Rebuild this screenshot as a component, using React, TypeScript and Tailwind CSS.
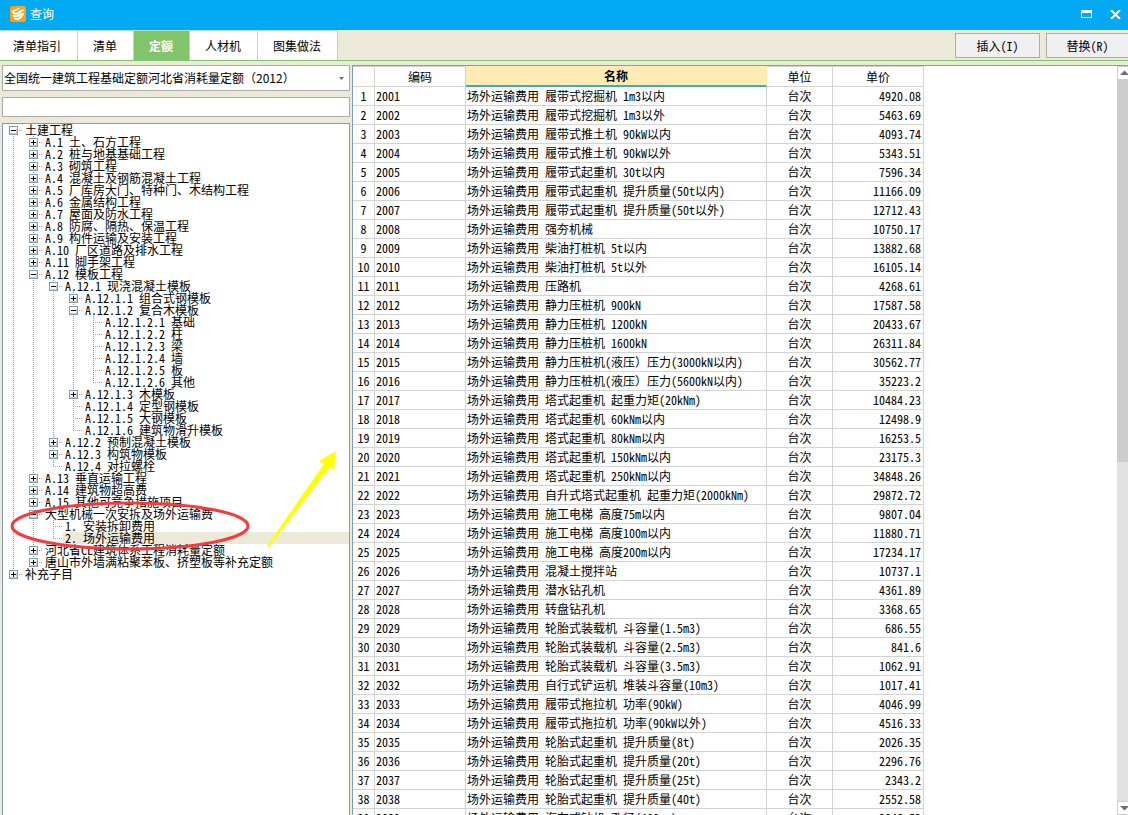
import { useState } from 'react';
import clsx from 'clsx';

type Mark = 'plus' | 'minus' | 'leaf';

interface TreeNode {
  level: number;
  mark: Mark;
  label: string;
}

const TREE: TreeNode[] = [
  { level: 0, mark: 'minus', label: '土建工程' },
  { level: 1, mark: 'plus', label: 'A.1 土、石方工程' },
  { level: 1, mark: 'plus', label: 'A.2 桩与地基基础工程' },
  { level: 1, mark: 'plus', label: 'A.3 砌筑工程' },
  { level: 1, mark: 'plus', label: 'A.4 混凝土及钢筋混凝土工程' },
  { level: 1, mark: 'plus', label: 'A.5 厂库房大门、特种门、木结构工程' },
  { level: 1, mark: 'plus', label: 'A.6 金属结构工程' },
  { level: 1, mark: 'plus', label: 'A.7 屋面及防水工程' },
  { level: 1, mark: 'plus', label: 'A.8 防腐、隔热、保温工程' },
  { level: 1, mark: 'plus', label: 'A.9 构件运输及安装工程' },
  { level: 1, mark: 'plus', label: 'A.10 厂区道路及排水工程' },
  { level: 1, mark: 'plus', label: 'A.11 脚手架工程' },
  { level: 1, mark: 'minus', label: 'A.12 模板工程' },
  { level: 2, mark: 'minus', label: 'A.12.1 现浇混凝土模板' },
  { level: 3, mark: 'plus', label: 'A.12.1.1 组合式钢模板' },
  { level: 3, mark: 'minus', label: 'A.12.1.2 复合木模板' },
  { level: 4, mark: 'leaf', label: 'A.12.1.2.1 基础' },
  { level: 4, mark: 'leaf', label: 'A.12.1.2.2 柱' },
  { level: 4, mark: 'leaf', label: 'A.12.1.2.3 梁' },
  { level: 4, mark: 'leaf', label: 'A.12.1.2.4 墙' },
  { level: 4, mark: 'leaf', label: 'A.12.1.2.5 板' },
  { level: 4, mark: 'leaf', label: 'A.12.1.2.6 其他' },
  { level: 3, mark: 'plus', label: 'A.12.1.3 木模板' },
  { level: 3, mark: 'leaf', label: 'A.12.1.4 定型钢模板' },
  { level: 3, mark: 'leaf', label: 'A.12.1.5 大钢模板' },
  { level: 3, mark: 'leaf', label: 'A.12.1.6 建筑物滑升模板' },
  { level: 2, mark: 'plus', label: 'A.12.2 预制混凝土模板' },
  { level: 2, mark: 'plus', label: 'A.12.3 构筑物模板' },
  { level: 2, mark: 'leaf', label: 'A.12.4 对拉螺栓' },
  { level: 1, mark: 'plus', label: 'A.13 垂直运输工程' },
  { level: 1, mark: 'plus', label: 'A.14 建筑物超高费' },
  { level: 1, mark: 'plus', label: 'A.15 其他可竞争措施项目' },
  { level: 1, mark: 'minus', label: '大型机械一次安拆及场外运输费' },
  { level: 2, mark: 'leaf', label: '1. 安装拆卸费用' },
  { level: 2, mark: 'leaf', label: '2. 场外运输费用' },
  { level: 1, mark: 'plus', label: '河北省CL建筑体系工程消耗量定额' },
  { level: 1, mark: 'plus', label: '唐山市外墙满粘聚苯板、挤塑板等补充定额' },
  { level: 0, mark: 'plus', label: '补充子目' },
];

const SELECTED = 34;

// [name without the common prefix, unit price]; codes run on from 2001
const ITEMS: [string, string][] = [
  ['履带式挖掘机 1m3以内', '4920.08'],
  ['履带式挖掘机 1m3以外', '5463.69'],
  ['履带式推土机 90kW以内', '4093.74'],
  ['履带式推土机 90kW以外', '5343.51'],
  ['履带式起重机 30t以内', '7596.34'],
  ['履带式起重机 提升质量(50t以内)', '11166.09'],
  ['履带式起重机 提升质量(50t以外)', '12712.43'],
  ['强夯机械', '10750.17'],
  ['柴油打桩机 5t以内', '13882.68'],
  ['柴油打桩机 5t以外', '16105.14'],
  ['压路机', '4268.61'],
  ['静力压桩机 900kN', '17587.58'],
  ['静力压桩机 1200kN', '20433.67'],
  ['静力压桩机 1600kN', '26311.84'],
  ['静力压桩机(液压）压力(3000kN以内)', '30562.77'],
  ['静力压桩机(液压）压力(5600kN以内)', '35223.2'],
  ['塔式起重机 起重力矩(20kNm)', '10484.23'],
  ['塔式起重机 60kNm以内', '12498.9'],
  ['塔式起重机 80kNm以内', '16253.5'],
  ['塔式起重机 150kNm以内', '23175.3'],
  ['塔式起重机 250kNm以内', '34848.26'],
  ['自升式塔式起重机 起重力矩(2000kNm)', '29872.72'],
  ['施工电梯 高度75m以内', '9807.04'],
  ['施工电梯 高度100m以内', '11880.71'],
  ['施工电梯 高度200m以内', '17234.17'],
  ['混凝土搅拌站', '10737.1'],
  ['潜水钻孔机', '4361.89'],
  ['转盘钻孔机', '3368.65'],
  ['轮胎式装载机 斗容量(1.5m3)', '686.55'],
  ['轮胎式装载机 斗容量(2.5m3)', '841.6'],
  ['轮胎式装载机 斗容量(3.5m3)', '1062.91'],
  ['自行式铲运机 堆装斗容量(10m3)', '1017.41'],
  ['履带式拖拉机 功率(90kW)', '4046.99'],
  ['履带式拖拉机 功率(90kW以外)', '4516.33'],
  ['轮胎式起重机 提升质量(8t)', '2026.35'],
  ['轮胎式起重机 提升质量(20t)', '2296.76'],
  ['轮胎式起重机 提升质量(25t)', '2343.2'],
  ['轮胎式起重机 提升质量(40t)', '2552.58'],
  ['汽车式钻机 孔径(400mm)', '3046.52'],
];

const TABS = ['清单指引', '清单', '定额', '人材机', '图集做法'];

// true when a guide line at this level carries on below the given row
function continues(index: number, level: number) {
  for (let i = index + 1; i < TREE.length; i++) {
    if (TREE[i].level === level) return true;
    if (TREE[i].level < level) return false;
  }
  return false;
}

function Guide({ on }: { on: boolean }) {
  return (
    <svg width="20" height="12" className="shrink-0" shapeRendering="crispEdges" aria-hidden="true">
      {on && <path d="M10.5 0V12" stroke="#9a9a9a" strokeDasharray="1 1" />}
    </svg>
  );
}

function Branch({ mark, up, down }: { mark: Mark; up: boolean; down: boolean }) {
  return (
    <svg width="20" height="12" className="block shrink-0" shapeRendering="crispEdges" aria-hidden="true">
      {up && <path d="M10.5 0V6" stroke="#9a9a9a" strokeDasharray="1 1" />}
      {down && <path d="M10.5 6V12" stroke="#9a9a9a" strokeDasharray="1 1" />}
      <path d="M10 6.5H20" stroke="#aca899" strokeDasharray="1 1" />
      {mark !== 'leaf' && (
        <>
          <rect x="6" y="2" width="9" height="9" fill="#7b9ebd" />
          <rect x="7" y="3" width="7" height="7" fill="#fff" />
          <path d="M7 9.5H14M13.5 5V10" stroke="#d0cabc" />
          <path d="M8 6.5H13" stroke="#000" />
          {mark === 'plus' && <path d="M10.5 4V9" stroke="#000" />}
        </>
      )}
    </svg>
  );
}

function TreeRow({ node, index, selected, onSelect }: {
  node: TreeNode;
  index: number;
  selected: boolean;
  onSelect: () => void;
}) {
  const branch = (
    <Branch mark={node.mark} up={index > 0} down={continues(index, node.level)} />
  );
  return (
    <li className="flex h-3">
      {Array.from({ length: node.level }, (_, l) => (
        <Guide key={l} on={continues(index, l)} />
      ))}
      {node.mark === 'leaf' ? branch : (
        <button type="button" aria-label={node.label} className="h-3 shrink-0">{branch}</button>
      )}
      <button
        type="button"
        onClick={onSelect}
        className={clsx(
          'h-3 flex-1 pl-[2px] text-left leading-3 whitespace-nowrap',
          selected && 'bg-[#ece9d8]',
        )}
      >
        {node.label}
      </button>
    </li>
  );
}

// half-width figures are on for the page, so a full-width bracket has to opt out
function ItemName({ name }: { name: string }) {
  const [head, tail] = name.split('）');
  if (tail === undefined) return <>{name}</>;
  return (
    <>
      {head}
      <span className="[font-feature-settings:normal]">）</span>
      {tail}
    </>
  );
}

function TitleBar() {
  return (
    <header className="flex h-[30px] shrink-0 items-center bg-[#02a9f3] pr-[7px] pb-[2px] pl-[10px] text-white">
      <svg width="16" height="16" viewBox="0 0 16 16" aria-hidden="true">
        <rect width="16" height="16" rx="2" fill="#f9a11b" />
        <g fill="none" stroke="#fff" strokeLinecap="round" strokeLinejoin="round">
          <path d="M2.500 5.500 8.500 2.800" strokeWidth="1.800" />
          <path d="M3 5.800C4 8 7 8.500 9 6.500S12 3.800 13.500 4.300" strokeWidth="2" />
          <path d="M3.500 9.500C5 11 8 10.500 9.500 9S12.500 7.500 13 7.800" strokeWidth="1.800" />
          <path d="M5 12.500C7 14 10 13 13 8.200" strokeWidth="1.800" />
        </g>
      </svg>
      <h1 className="ml-1 flex-1">查询</h1>
      <button type="button" aria-label="最大化" className="mr-[18px]">
        <svg width="11" height="8" shapeRendering="crispEdges" className="block">
          <path d="M0 0H11V8H0ZM1 3V7H10V3Z" fill="#fff" fillRule="evenodd" />
        </svg>
      </button>
      <button type="button" aria-label="关闭">
        <svg width="11" height="9" className="block">
          <path d="M1 0 10 9M10 0 1 9" stroke="#fff" strokeWidth="2" />
        </svg>
      </button>
    </header>
  );
}

function ScrollBar() {
  return (
    <div className="flex w-[11px] shrink-0 flex-col overflow-hidden bg-[#e1e1e1]">
      <button type="button" aria-label="向上滚动" className="h-[14px] shrink-0 border border-r-0 border-[#cdcdcd] bg-white">
        <svg width="10" height="12" className="block"><path d="M2 8 6.500 3.500 11 8Z" fill="#6d6d78" /></svg>
      </button>
      <div className="flex-1">
        <div className="h-[53%] bg-[#cdcdcd]" />
      </div>
      <button type="button" aria-label="向下滚动" className="h-[14px] shrink-0 border border-r-0 border-[#cdcdcd] bg-white">
        <svg width="10" height="12" className="block"><path d="M2 4 6.500 8.500 11 4Z" fill="#6d6d78" /></svg>
      </button>
    </div>
  );
}

export default function App() {
  const [tab, setTab] = useState('定额');
  const [selected, setSelected] = useState(SELECTED);
  const [query, setQuery] = useState('');

  return (
    <div className="flex h-screen flex-col overflow-hidden bg-[#ece9d8] font-['Noto_Sans_CJK_SC',sans-serif] text-[12px] leading-4 text-black [font-feature-settings:'hwid']">
      <TitleBar />

      <nav className="flex h-[31px] shrink-0 border-b border-[#80c46c]">
        {TABS.map((t) => (
          <button
            key={t}
            type="button"
            onClick={() => setTab(t)}
            className={clsx(
              'border-t border-r border-[#b5e0a4] pr-4 pl-[15px] first:pl-[13px]',
              t === tab ? 'border-[#80c46c] bg-[#80c46c] font-bold text-white' : 'bg-white',
            )}
          >
            {t}
          </button>
        ))}
        <div className="ml-auto flex gap-[6px] pt-[3px] pb-[2px]">
          <button type="button" className="w-[85px] border border-[#acacac] bg-[#f0f0f0]">插入(I)</button>
          <button type="button" className="w-[82px] border border-r-0 border-[#acacac] bg-[#f0f0f0]">替换(R)</button>
        </div>
      </nav>

      <main className="flex min-h-0 flex-1 gap-[2px] pt-1 pl-[2px]">
        <aside className="flex w-[348px] shrink-0 flex-col gap-[6px]">
          <div className="relative">
            <select
              aria-label="定额库"
              className="block h-[26px] w-full appearance-none border border-[#acacac] bg-white pl-px [font-feature-settings:normal]"
            >
              <option>全国统一建筑工程基础定额河北省消耗量定额（2012）</option>
            </select>
            <svg width="5" height="3" className="pointer-events-none absolute top-3 right-[6px]" aria-hidden="true">
              <path d="M0 0H5L2.500 3Z" fill="#6d6d78" />
            </svg>
          </div>
          <input
            type="text"
            aria-label="搜索"
            value={query}
            onChange={(e) => setQuery(e.target.value)}
            className="h-5 shrink-0 border border-[#acacac] bg-white px-1 outline-none"
          />
          <div className="relative min-h-0 flex-1 overflow-hidden border border-b-0 border-[#7f9db9] bg-white">
            <ul>
              {TREE.map((node, i) => (
                <TreeRow
                  key={node.label}
                  node={node}
                  index={i}
                  selected={i === selected}
                  onSelect={() => setSelected(i)}
                />
              ))}
            </ul>
            {/* hand-drawn marks over the tree */}
            <svg width="346" height="460" className="pointer-events-none absolute top-0 left-0" aria-hidden="true">
              <ellipse cx="127" cy="402" rx="118" ry="23" fill="none" stroke="#f93a3a" strokeWidth="3" />
              <path d="M333 327 316 337 321 340 264 422 266 423 327 343 331 346Z" fill="#ff0" />
            </svg>
          </div>
        </aside>

        <section className="flex min-w-0 flex-1 border-t border-l border-[#7f9db9] bg-white">
          <div className="min-w-0 flex-1 overflow-hidden">
            <table className="w-[571px] table-fixed border-separate border-spacing-0">
              <colgroup>
                <col className="w-[22px]" />
                <col className="w-[91px]" />
                <col className="w-[301px]" />
                <col className="w-[66px]" />
                <col className="w-[91px]" />
              </colgroup>
              <thead>
                <tr className="h-[21px] *:border-t *:border-r *:border-b *:border-[#d3d3d3] *:p-0 *:font-normal">
                  <th></th>
                  <th>编码</th>
                  <th className="border-t-[#ffecb5]! border-r-[#ffecb5]! border-b-2! border-b-[#3ba7d3]! bg-[#ffecb5] font-bold!">名称</th>
                  <th>单位</th>
                  <th>单价</th>
                </tr>
              </thead>
              <tbody>
                {ITEMS.map(([name, price], i) => (
                  <tr key={i} className="h-[19px] *:border-r *:border-b *:border-[#d3d3d3] *:p-0 *:whitespace-nowrap">
                    <td className="text-center">{i + 1}</td>
                    <td className="pl-px!">{2001 + i}</td>
                    <td className="pl-px!">场外运输费用 <ItemName name={name} /></td>
                    <td className="text-center">台次</td>
                    <td className="pr-[2px]! text-right">{price}</td>
                  </tr>
                ))}
              </tbody>
            </table>
          </div>
          <ScrollBar />
        </section>
      </main>
    </div>
  );
}
